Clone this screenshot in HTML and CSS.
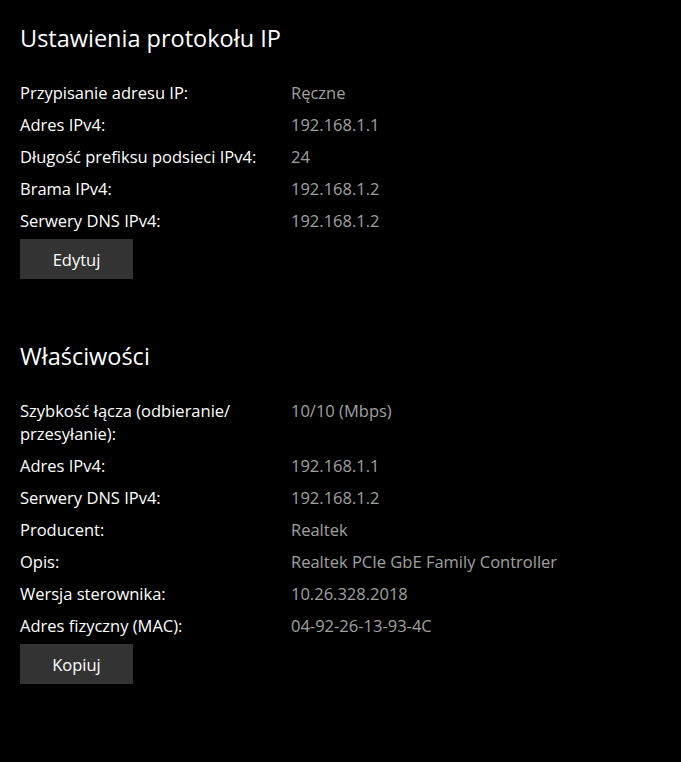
FILE: index.html
```html
<!DOCTYPE html>
<html lang="pl">
  <head>
    <meta charset="UTF-8" />
    <meta name="viewport" content="width=device-width, initial-scale=1.0" />
    <title>Ustawienia protokołu IP</title>
    <link rel="stylesheet" href="styles.css">
  </head>
  <body>
    <section class="group">
      <h2 class="group-title">Ustawienia protokołu IP</h2>
      <dl class="props">
        <dt>Przypisanie adresu IP:</dt>
        <dd>Ręczne</dd>
        <dt>Adres IPv4:</dt>
        <dd>192.168.1.1</dd>
        <dt>Długość prefiksu podsieci IPv4:</dt>
        <dd>24</dd>
        <dt>Brama IPv4:</dt>
        <dd>192.168.1.2</dd>
        <dt>Serwery DNS IPv4:</dt>
        <dd>192.168.1.2</dd>
      </dl>
      <button type="button" class="btn">Edytuj</button>
    </section>

    <section class="group">
      <h2 class="group-title">Właściwości</h2>
      <dl class="props">
        <dt>Szybkość łącza (odbieranie/<br />przesyłanie):</dt>
        <dd>10/10 (Mbps)</dd>
        <dt>Adres IPv4:</dt>
        <dd>192.168.1.1</dd>
        <dt>Serwery DNS IPv4:</dt>
        <dd>192.168.1.2</dd>
        <dt>Producent:</dt>
        <dd>Realtek</dd>
        <dt>Opis:</dt>
        <dd>Realtek PCIe GbE Family Controller</dd>
        <dt>Wersja sterownika:</dt>
        <dd>10.26.328.2018</dd>
        <dt>Adres fizyczny (MAC):</dt>
        <dd>04-92-26-13-93-4C</dd>
      </dl>
      <button type="button" class="btn">Kopiuj</button>
    </section>
  </body>
</html>
```

FILE: styles.css
```css
body {
  margin: 0;
  padding: 22px 20px 0 20px;
  background-color: #000;
  color: #fff;
  font-family: "Open Sans", "Noto Sans", sans-serif;
  font-size: 16.5px;
}
.group {
  margin-bottom: 61px;
}
.group-title {
  margin: 0 0 23px 0;
  font-size: 23.5px;
  font-weight: 400;
  line-height: 32px;
}
.props {
  display: grid;
  grid-template-columns: 271px 1fr;
  margin: 0;
}
.props dt,
.props dd {
  margin: 0;
  padding: 4px 0 5px 0;
  line-height: 23px;
}
.props dd {
  color: #a0a0a0;
}
.btn {
  margin-top: 2px;
  width: 113px;
  height: 40px;
  border: none;
  background-color: #333;
  color: #fff;
  font-family: inherit;
  font-size: 16.5px;
  cursor: pointer;
}
```
